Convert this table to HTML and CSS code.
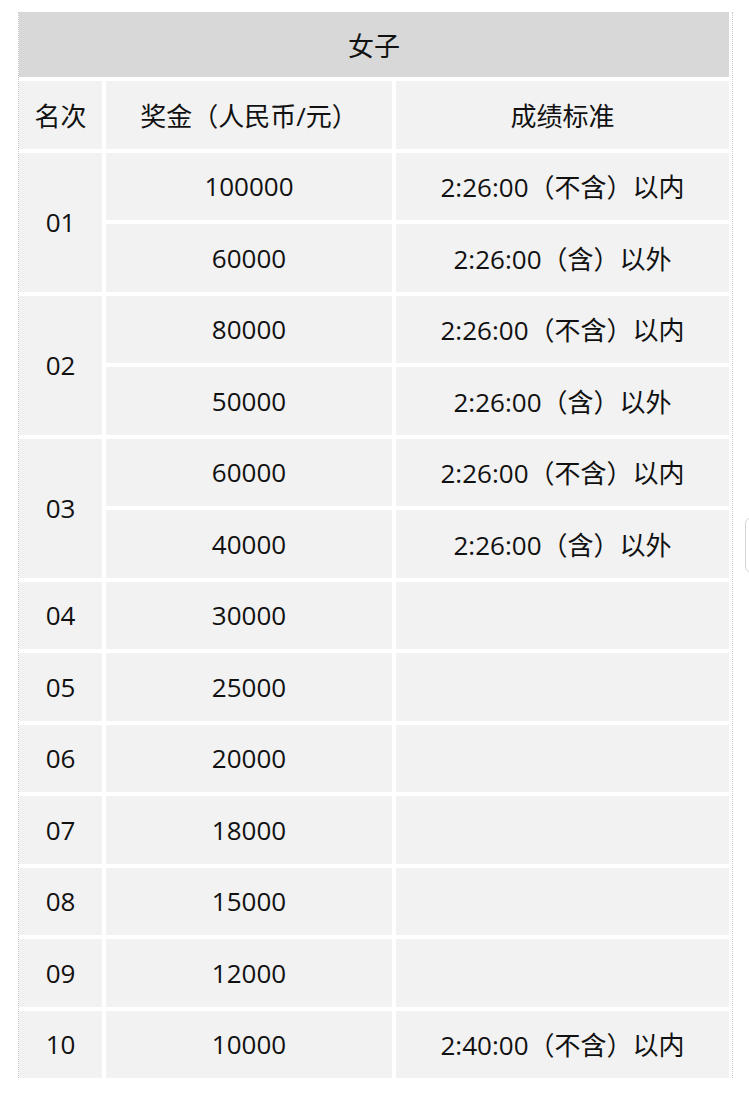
FILE: index.html
```html
<!DOCTYPE html>
<html lang="zh">
<head>
<meta charset="utf-8">
<link rel="stylesheet" href="styles.css">
</head>
<body>
<div class="sheet">
  <div class="title">女子</div>
  <div class="grid">
    <div class="cell">名次</div>
    <div class="cell">奖金（人民币/元）</div>
    <div class="cell">成绩标准</div>

    <div class="cell span2">01</div>
    <div class="cell">100000</div>
    <div class="cell">2:26:00（不含）以内</div>
    <div class="cell">60000</div>
    <div class="cell">2:26:00（含）以外</div>

    <div class="cell span2">02</div>
    <div class="cell">80000</div>
    <div class="cell">2:26:00（不含）以内</div>
    <div class="cell">50000</div>
    <div class="cell">2:26:00（含）以外</div>

    <div class="cell span2">03</div>
    <div class="cell">60000</div>
    <div class="cell">2:26:00（不含）以内</div>
    <div class="cell">40000</div>
    <div class="cell">2:26:00（含）以外</div>

    <div class="cell">04</div><div class="cell">30000</div><div class="cell"></div>
    <div class="cell">05</div><div class="cell">25000</div><div class="cell"></div>
    <div class="cell">06</div><div class="cell">20000</div><div class="cell"></div>
    <div class="cell">07</div><div class="cell">18000</div><div class="cell"></div>
    <div class="cell">08</div><div class="cell">15000</div><div class="cell"></div>
    <div class="cell">09</div><div class="cell">12000</div><div class="cell"></div>
    <div class="cell">10</div><div class="cell">10000</div><div class="cell">2:40:00（不含）以内</div>
  </div>
</div>
<div class="edge-tab"></div>
</body>
</html>
```

FILE: styles.css
```css
html, body {
  margin: 0;
  padding: 0;
  background: #ffffff;
}

body {
  font-family: "Open Sans", "Noto Sans CJK SC", sans-serif;
  color: #111111;
  font-size: 26px;
}

.sheet {
  margin: 12px 0 0 18px;
  width: 710px;
  padding-right: 3px;
  border-left: 1px dotted #c8c8c8;
  border-right: 1px dotted #c8c8c8;
}

.title {
  height: 65px;
  background: #d8d8d8;
  display: flex;
  align-items: center;
  justify-content: center;
  margin-bottom: 4px;
}

.grid {
  display: grid;
  grid-template-columns: 83px 286px 333px;
  grid-auto-rows: 67.5px;
  column-gap: 4px;
  row-gap: 4px;
}

.cell {
  background: #f2f2f2;
  display: flex;
  align-items: center;
  justify-content: center;
  white-space: nowrap;
}

.span2 {
  grid-row: span 2;
}

.edge-tab {
  position: absolute;
  left: 745px;
  top: 518px;
  width: 20px;
  height: 54px;
  border: 1px solid #d4d4d4;
  border-radius: 5px;
  box-sizing: border-box;
}
```
